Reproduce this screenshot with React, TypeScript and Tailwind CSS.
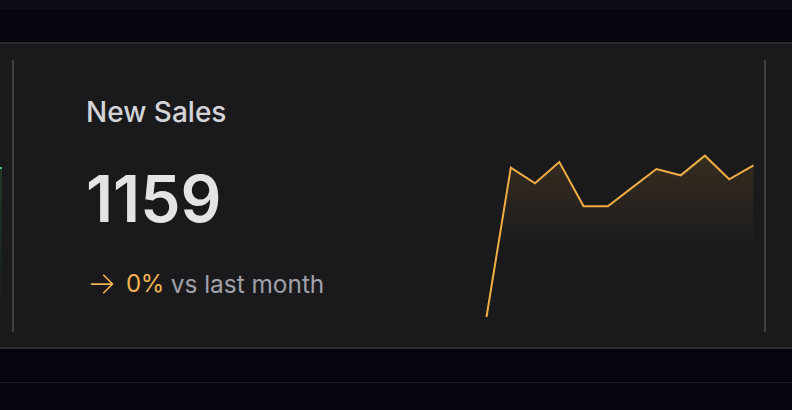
import React from "react";

const xs = [4.5, 28.8, 53, 77.3, 101.6, 125.9, 150.1, 174.4, 198.7, 222.9, 247.2, 271.5];
const ys = [169, 19.7, 35.3, 14, 58.3, 58.3, 39.6, 21, 27.3, 7.7, 31.3, 17.3];

function Sparkline() {
  const line = xs.map((x, i) => `${i === 0 ? "M" : "L"}${x} ${ys[i]}`).join(" ");
  const area = `${line} L${xs[xs.length - 1]} 169 L${xs[0]} 169 Z`;
  return (
    <svg width="276" height="176" viewBox="0 0 276 176" className="block">
      <defs>
        <linearGradient id="amberFill" x1="0" y1="0" x2="0" y2="1">
          <stop offset="0" stopColor="#f5a83a" stopOpacity="0.13" />
          <stop offset="0.6" stopColor="#f5a83a" stopOpacity="0" />
        </linearGradient>
      </defs>
      <path d={area} fill="url(#amberFill)" />
      <path d={line} fill="none" stroke="#f0ad43" strokeWidth="2" strokeLinejoin="miter" />
    </svg>
  );
}

export default function App() {
  return (
    <div
      className="w-[792px] h-[410px] bg-[#06040d] overflow-hidden flex flex-col"
      style={{ fontFamily: "Inter, 'Noto Sans', sans-serif" }}
    >
      <div className="h-[10px] bg-[#0e0c14]" />
      <div className="h-[32px]" />
      <div className="border-y-2 border-[#2b2b2f] bg-[#1a1a1c] pt-[16px] pb-[15px] flex">
        <div className="w-[12px] relative">
          <div className="absolute left-0 top-[107px] w-[2px] h-[2px] bg-[#3ecf6e]" />
          <div className="absolute left-0 top-[109px] w-[2px] h-[140px] bg-gradient-to-b from-[#1d3a28] to-transparent" />
        </div>
        <div className="w-[754px] h-[272px] border-x-2 border-[#3f3f46] flex justify-between">
          <div className="pl-[72px] py-[32px] flex flex-col gap-[32px]">
            <div className="text-[28px] leading-[40px] font-medium text-[#d4d4d8]">New Sales</div>
            <div className="text-[64px] leading-[72px] font-semibold text-[#e4e4e7] -mt-[1px] mb-[1px]">1159</div>
            <div className="flex items-center text-[24px] leading-[32px]">
              <svg width="28" height="28" viewBox="0 0 24 24" fill="none" stroke="#f2b252" strokeWidth="1.5" strokeLinecap="round" strokeLinejoin="round" className="ml-[2px]">
                <path d="M13.5 4.5 21 12m0 0-7.5 7.5M21 12H3" />
              </svg>
              <span className="text-[#f2b252] ml-[10px] tracking-[-0.5px]">0%</span>
              <span className="text-[#a1a1aa] ml-[7px] text-[24.4px]">vs last month</span>
            </div>
          </div>
          <div className="self-end mb-[8px] mr-[6px]">
            <Sparkline />
          </div>
        </div>
        <div className="flex-1" />
      </div>
      <div className="h-[33px]" />
      <div className="h-[1px] bg-[#1f1d26]" />
    </div>
  );
}
